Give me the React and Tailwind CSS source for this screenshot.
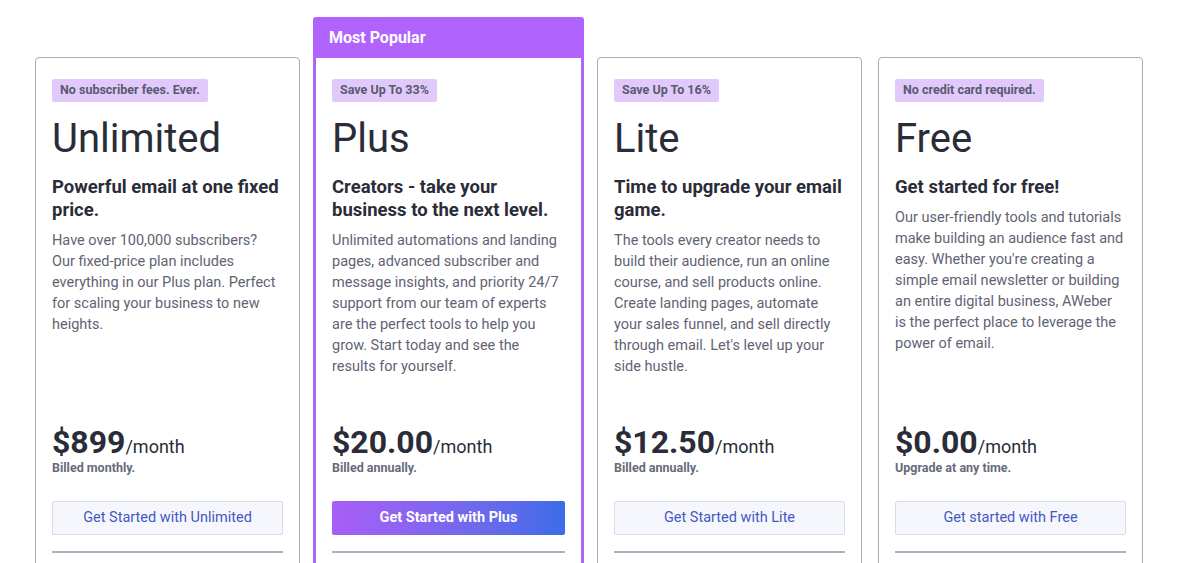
import React from 'react';

const plans = [
  {
    badge: 'No subscriber fees. Ever.',
    name: 'Unlimited',
    tagline: 'Powerful email at one fixed price.',
    body: 'Have over 100,000 subscribers? Our fixed-price plan includes everything in our Plus plan. Perfect for scaling your business to new heights.',
    price: '$899',
    note: 'Billed monthly.',
    cta: 'Get Started with Unlimited',
  },
  {
    badge: 'Save Up To 33%',
    name: 'Plus',
    tagline: 'Creators - take your business to the next level.',
    body: 'Unlimited automations and landing pages, advanced subscriber and message insights, and priority 24/7 support from our team of experts are the perfect tools to help you grow. Start today and see the results for yourself.',
    price: '$20.00',
    note: 'Billed annually.',
    cta: 'Get Started with Plus',
    popular: true,
  },
  {
    badge: 'Save Up To 16%',
    name: 'Lite',
    tagline: 'Time to upgrade your email game.',
    body: "The tools every creator needs to build their audience, run an online course, and sell products online. Create landing pages, automate your sales funnel, and sell directly through email. Let's level up your side hustle.",
    price: '$12.50',
    note: 'Billed annually.',
    cta: 'Get Started with Lite',
  },
  {
    badge: 'No credit card required.',
    name: 'Free',
    tagline: 'Get started for free!',
    body: "Our user-friendly tools and tutorials make building an audience fast and easy. Whether you're creating a simple email newsletter or building an entire digital business, AWeber is the perfect place to leverage the power of email.",
    price: '$0.00',
    note: 'Upgrade at any time.',
    cta: 'Get started with Free',
  },
];

const PlanBody = ({ plan }) => (
  <div className="px-4 pt-[19px] pb-10">
    {/* Top copy, fixed height so prices line up */}
    <div className="h-[353px]">
      <div className="inline-flex h-[23px] items-center rounded-[2px] bg-[#e2c9fc] px-2 text-[12.5px] font-bold text-[#575b6d]">
        {plan.badge}
      </div>
      <h2 className="mt-[13px] text-[40px] leading-[48px] font-normal text-[#2a2c38]">{plan.name}</h2>
      <h3 className="mt-[13px] text-[18.5px] leading-[23px] font-bold text-[#2a2c38]">{plan.tagline}</h3>
      <p className="mt-[8px] text-[14.5px] leading-[21px] text-[#5f6374]">{plan.body}</p>
    </div>

    {/* Price */}
    <div className="leading-[24px] text-[#2a2c38]">
      <span className="text-[32px] font-bold">{plan.price}</span>
      <span className="text-[18px]">/month</span>
    </div>
    <div className="text-[12.5px] leading-4 font-bold text-[#676b7c]">{plan.note}</div>

    {plan.popular ? (
      <button className="mt-[25px] flex h-[34px] w-full items-center justify-center rounded-[2px] bg-gradient-to-r from-[#a95df6] to-[#3b6ce7] text-[14.5px] font-bold text-white">
        {plan.cta}
      </button>
    ) : (
      <button className="mt-[25px] flex h-[34px] w-full items-center justify-center rounded-[2px] border border-[#d6daeb] bg-[#f6f7fd] text-[14.5px] text-[#4458c3]">
        {plan.cta}
      </button>
    )}
    <div className="mt-[16px] h-[2px] bg-[#abb3c0]" />
  </div>
);

export default function App() {
  return (
    <div
      className="h-[563px] overflow-hidden bg-white"
      style={{ fontFamily: 'Roboto, "Liberation Sans", sans-serif' }}
    >
      <div className="flex items-start gap-[13px] pl-[35px] pt-[17px]">
        {plans.map((plan) =>
          plan.popular ? (
            <div key={plan.name} className="w-[271px] shrink-0">
              <div className="flex h-[41px] items-center rounded-t-[3px] bg-[#b064fd] px-4 text-[16px] font-bold text-white">
                Most Popular
              </div>
              <div className="border-x-[3px] border-b-[3px] border-[#ac66f4] bg-white">
                <PlanBody plan={plan} />
              </div>
            </div>
          ) : (
            <div
              key={plan.name}
              className={`mt-[40px] w-[265px] shrink-0 rounded-[4px] border border-[#a5adba] bg-white ${
                plan.name === 'Free' ? 'ml-[3px]' : ''
              }`}
            >
              <PlanBody plan={plan} />
            </div>
          )
        )}
      </div>
    </div>
  );
}
